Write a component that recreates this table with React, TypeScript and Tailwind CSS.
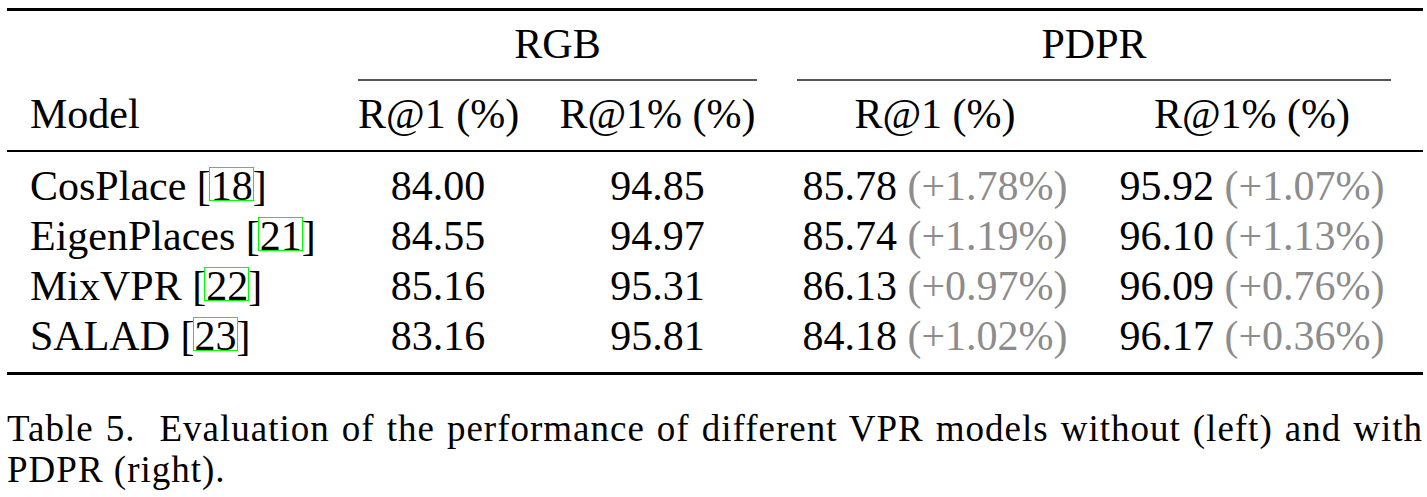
const rows = [
  { name: "CosPlace", cite: "18", rgb1: "84.00", rgbp: "94.85", p1: "85.78", g1: "+1.78%", pp: "95.92", gp: "+1.07%" },
  { name: "EigenPlaces", cite: "21", rgb1: "84.55", rgbp: "94.97", p1: "85.74", g1: "+1.19%", pp: "96.10", gp: "+1.13%" },
  { name: "MixVPR", cite: "22", rgb1: "85.16", rgbp: "95.31", p1: "86.13", g1: "+0.97%", pp: "96.09", gp: "+0.76%" },
  { name: "SALAD", cite: "23", rgb1: "83.16", rgbp: "95.81", p1: "84.18", g1: "+1.02%", pp: "96.17", gp: "+0.36%" },
];

function Cite({ n }: { n: string }) {
  return (
    <span>
      [
      <span className="relative">
        {n}
        <span className="absolute left-[-2px] right-[-1px] top-[4px] h-[34px] border border-[#00ff00]" />
      </span>
      ]
    </span>
  );
}

const cols = "grid grid-cols-[351px_160px_279px_276px_350px] whitespace-nowrap";

export default function App() {
  return (
    <div className="w-[1427px] h-[497px] bg-white text-black [font-family:'Liberation_Serif',serif] overflow-hidden">
      <div className="ml-[7px] w-[1416px] pt-[8px]">
        {/* top rule */}
        <div className="h-[3px] bg-black" />

        {/* group headers */}
        <div className={`${cols} mt-[8px] text-[42px] leading-[50px]`}>
          <div />
          <div className="col-span-2 mr-[40px] text-center">RGB</div>
          <div className="col-span-2 mr-[32px] text-center">PDPR</div>
        </div>
        <div className={`${cols} mt-[10px]`}>
          <div />
          <div className="col-span-2 mr-[40px] h-[2px] bg-[#555]" />
          <div className="col-span-2 mr-[32px] h-[2px] bg-[#555]" />
        </div>

        {/* column headers */}
        <div className={`${cols} mt-[8px] text-[42px] leading-[50px]`}>
          <div className="pl-[23px]">Model</div>
          <div className="text-center">R@1 (%)</div>
          <div className="text-center">R@1% (%)</div>
          <div className="text-center">R@1 (%)</div>
          <div className="text-center pl-[8px]">R@1% (%)</div>
        </div>

        {/* mid rule */}
        <div className="mt-[11px] h-[2px] bg-black" />

        <div className="mt-[9px] text-[42px] leading-[50px]">
          {rows.map((r) => (
            <div key={r.name} className={cols}>
              <div className="pl-[23px]">
                {r.name} <Cite n={r.cite} />
              </div>
              <div className="text-center">{r.rgb1}</div>
              <div className="text-center">{r.rgbp}</div>
              <div className="text-center">
                {r.p1} <span className="text-[#8c8c8c]">({r.g1})</span>
              </div>
              <div className="text-center pl-[8px]">
                {r.pp} <span className="text-[#8c8c8c]">({r.gp})</span>
              </div>
            </div>
          ))}
        </div>

        {/* bottom rule */}
        <div className="mt-[11px] h-[3px] bg-black" />

        {/* caption */}
        <div className="mt-[33px] text-[37px] leading-[41px] tracking-[1px]">
          <div className="text-justify [text-align-last:justify] whitespace-nowrap">
            Table 5.&nbsp; Evaluation of the performance of different VPR models without (left) and with
          </div>
          <div>PDPR (right).</div>
        </div>
      </div>
    </div>
  );
}
